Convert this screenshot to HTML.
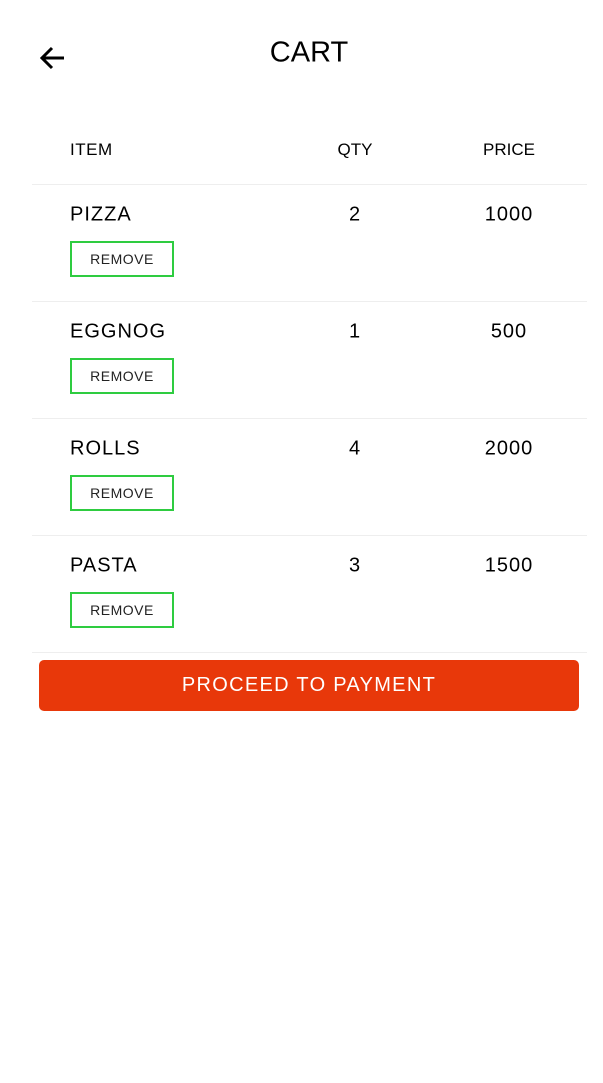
<!DOCTYPE html>
<html><head><style>
body{margin:0;width:603px;height:1083px;background:#fff;font-family:"Liberation Sans",sans-serif;color:#000;position:relative;overflow:hidden}
.a{position:absolute}
.t{position:absolute;transform:translate(-50%,-50%);white-space:nowrap}
.l{position:absolute;transform:translateY(-50%);white-space:nowrap}
.hr{position:absolute;left:32px;width:555px;height:1px;background:#eeeeee}
.rm{position:absolute;left:70px;width:100px;height:32px;border:2px solid #2ecc40;font-size:14px;text-align:center;line-height:32px;color:#222;letter-spacing:0.5px}
.it{font-size:20px;letter-spacing:1px}
</style></head><body>
<svg class="a" style="left:38px;top:44px" width="28" height="28" viewBox="0 0 28 28"><path d="M26 14H4M14 4L4 14L14 24" stroke="#000" stroke-width="3" fill="none"/></svg>
<div class="t" style="left:309px;top:53px;font-size:29px">CART</div>
<div class="l" style="left:70px;top:150px;font-size:17px;letter-spacing:0.5px">ITEM</div>
<div class="t" style="left:355px;top:150px;font-size:17px">QTY</div>
<div class="t" style="left:509px;top:150px;font-size:17px">PRICE</div>
<div class="hr" style="top:184px"></div>

<div class="l it" style="left:70px;top:215px">PIZZA</div>
<div class="t it" style="left:355px;top:215px">2</div>
<div class="t it" style="left:509px;top:215px">1000</div>
<div class="rm" style="top:241px">REMOVE</div>
<div class="hr" style="top:301px"></div>

<div class="l it" style="left:70px;top:332px">EGGNOG</div>
<div class="t it" style="left:355px;top:332px">1</div>
<div class="t it" style="left:509px;top:332px">500</div>
<div class="rm" style="top:358px">REMOVE</div>
<div class="hr" style="top:418px"></div>

<div class="l it" style="left:70px;top:449px">ROLLS</div>
<div class="t it" style="left:355px;top:449px">4</div>
<div class="t it" style="left:509px;top:449px">2000</div>
<div class="rm" style="top:475px">REMOVE</div>
<div class="hr" style="top:535px"></div>

<div class="l it" style="left:70px;top:566px">PASTA</div>
<div class="t it" style="left:355px;top:566px">3</div>
<div class="t it" style="left:509px;top:566px">1500</div>
<div class="rm" style="top:592px">REMOVE</div>
<div class="hr" style="top:652px"></div>

<div class="a" style="left:39px;top:660px;width:540px;height:51px;background:#e8380a;border-radius:5px;color:#fff;font-size:20px;text-align:center;line-height:51px;letter-spacing:1.3px">PROCEED TO PAYMENT</div>
</body></html>
